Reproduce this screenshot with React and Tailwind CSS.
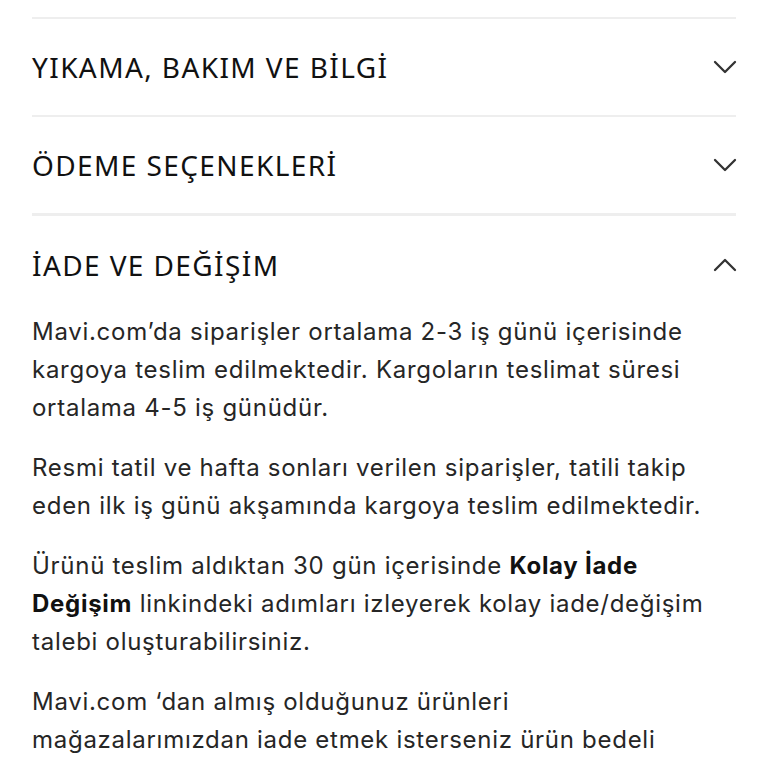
const SECTIONS = [
  { title: "YIKAMA, BAKIM VE BİLGİ", open: false },
  { title: "ÖDEME SEÇENEKLERİ", open: false },
  { title: "İADE VE DEĞİŞİM", open: true },
];

function Chevron({ up }) {
  return (
    <svg width="24" height="15" viewBox="0 0 24 15" fill="none" className="shrink-0 -mr-[1px]">
      <polyline
        points={up ? "2,13 12,3 22,13" : "2,2 12,12 22,2"}
        stroke="#333"
        strokeWidth="2.3"
        strokeLinecap="round"
        strokeLinejoin="round"
      />
    </svg>
  );
}

function Body() {
  return (
    <div className="flex flex-col gap-[22px] pb-8 text-[24px] leading-[38px] tracking-[0.03em] text-[#262626]" style={{ fontFamily: "Inter, sans-serif" }}>
      <p>
        Mavi.com’da siparişler ortalama 2-3 iş günü içerisinde<br />
        kargoya teslim edilmektedir. Kargoların teslimat süresi<br />
        ortalama 4-5 iş günüdür.
      </p>
      <p>
        Resmi tatil ve hafta sonları verilen siparişler, tatili takip<br />
        eden ilk iş günü akşamında kargoya teslim edilmektedir.
      </p>
      <p>
        Ürünü teslim aldıktan 30 gün içerisinde <b className="font-bold text-[#111]">Kolay İade</b><br />
        <b className="font-bold text-[#111]">Değişim</b> linkindeki adımları izleyerek kolay iade/değişim<br />
        talebi oluşturabilirsiniz.
      </p>
      <p>
        Mavi.com ‘dan almış olduğunuz ürünleri<br />
        mağazalarımızdan iade etmek isterseniz ürün bedeli
      </p>
    </div>
  );
}

export default function App() {
  return (
    <div className="min-h-screen bg-white px-8 pt-[17px]">
      {SECTIONS.map((s, i) => (
        <div key={s.title} className={i === 2 ? "border-t-[3px] border-[#eeeeee]" : "border-t-2 border-[#eeeeee]"}>
          <div className={"flex items-center justify-between " + (i === 2 ? "h-[97px]" : "h-[96px]")}>
            <h3 className="text-[28px] font-normal tracking-[0.05em] text-[#111]" style={{ fontFamily: '"Noto Sans", sans-serif' }}>
              {s.title}
            </h3>
            <Chevron up={s.open} />
          </div>
          {s.open && <Body />}
        </div>
      ))}
    </div>
  );
}
